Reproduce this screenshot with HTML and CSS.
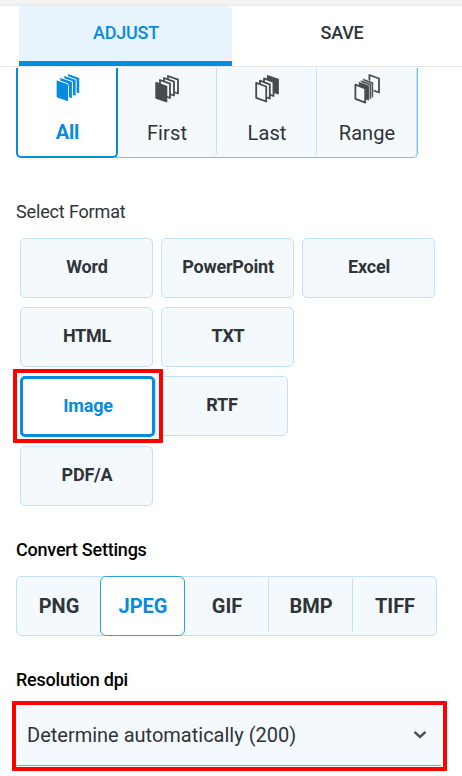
FILE: index.html
```html
<!DOCTYPE html>
<html lang="en">
<head>
<meta charset="utf-8">
<title>Convert</title>
<link rel="stylesheet" href="styles.css">
</head>
<body>
<div class="strip"></div>
<nav class="tabs">
  <div class="tab tab-active">ADJUST</div>
  <div class="tab">SAVE</div>
</nav>
<main>
  <div class="pages">
    <div class="page page-active">
      <svg class="icon" viewBox="0 0 26 31" width="26" height="31">
        <g fill="currentColor" stroke="#fff" stroke-width="1" stroke-linejoin="round">
          <path d="M12.6 1.4L24.8 5.7V22L12.6 18Z"/><path d="M8.8 3.3L21.1 7.6V24.4L8.8 20.5Z"/><path d="M4.8 5.2L17.4 9.6V26.8L4.8 22.6Z"/>
          <path d="M1.1 9.3Q1.1 7.7 2.6 8.2L12 11.5Q13.5 12 13.5 13.5V28.2Q13.5 30 11.8 29.4L2.6 26.1Q1.1 25.6 1.1 24.2Z"/>
        </g>
      </svg>
      <span>All</span>
    </div>
    <div class="page">
      <svg class="icon" viewBox="0 0 26 31" width="26" height="31">
        <g fill="#f4f9fd" stroke="currentColor" stroke-width="1.8" stroke-linejoin="round">
          <path d="M14 3L24 6.7V20.5L14 17Z"/><path d="M10 5L20 8.7V22.5L10 19Z"/><path d="M6 7L16 10.7V25L6 21Z"/><path fill="currentColor" d="M2.2 9.8L12.4 13.5V28.5L2.2 24.8Z"/>
        </g>
      </svg>
      <span>First</span>
    </div>
    <div class="page">
      <svg class="icon" viewBox="0 0 26 31" width="26" height="31">
        <g fill="#f4f9fd" stroke="currentColor" stroke-width="1.8" stroke-linejoin="round">
          <path fill="currentColor" d="M13.8 3L24 6.7V20.5L13.8 17Z"/><path d="M10 5.4L19.5 9V23L10 19.5Z"/><path d="M6 7.6L15.8 11.3V25.5L6 22Z"/><path d="M2.2 9.8L12.2 13.5V28.5L2.2 24.8Z"/>
        </g>
      </svg>
      <span>Last</span>
    </div>
    <div class="page">
      <svg class="icon" viewBox="0 0 26 31" width="26" height="31">
        <g fill="#f4f9fd" stroke="currentColor" stroke-width="1.8" stroke-linejoin="round">
          <path d="M15.4 2L25 5.5V19.5L15.4 16Z"/>
        </g>
        <g fill="currentColor" stroke="#f4f9fd" stroke-width="0.6" stroke-linejoin="round">
          <path d="M8.9 5.3L19.4 9.2V25L8.9 21Z"/><path d="M6.7 6.9L17.4 10.8V26.6L6.7 22.6Z"/><path d="M4.5 8.5L15.4 12.4V28L4.5 24Z"/>
        </g>
        <path fill="#f4f9fd" stroke="currentColor" stroke-width="1.8" stroke-linejoin="round" d="M1.4 11.7L11.2 15.4V29.6L1.4 25.9Z"/>
      </svg>
      <span>Range</span>
    </div>
  </div>

  <h2 class="label format-label">Select Format</h2>
  <div class="formats">
    <div class="row"><div class="tile">Word</div><div class="tile">PowerPoint</div><div class="tile">Excel</div></div>
    <div class="row"><div class="tile">HTML</div><div class="tile">TXT</div></div>
    <div class="row row-tight"><div class="tile tile-active">Image<i class="mark mark-image"></i></div><div class="tile">RTF</div></div>
    <div class="row"><div class="tile">PDF/A</div></div>
  </div>

  <h2 class="label label-dark convert-label">Convert Settings</h2>
  <div class="types">
    <div class="type">PNG</div><div class="type type-active">JPEG</div><div class="type">GIF</div><div class="type divided">BMP</div><div class="type divided">TIFF</div>
  </div>

  <h2 class="label label-dark dpi-label">Resolution dpi</h2>
  <div class="select">
    <span>Determine automatically (200)</span>
    <svg viewBox="0 0 14 10" width="14" height="10"><path d="M1.5 1.8L7 7L12.5 1.8" fill="none" stroke="#505458" stroke-width="2.5"/></svg>
    <i class="mark mark-select"></i>
  </div>
</main>
</body>
</html>
```
FILE: styles.css
```css
* { box-sizing: border-box; }
html, body { height: 100%; }
body {
  margin: 0;
  background: #fff;
  color: #303438;
  font-family: Roboto, "Liberation Sans", sans-serif;
  overflow: hidden;
}
.strip { height: 6px; background: linear-gradient(#f4f4f4 50%, #e9e9e9); }
.tabs {
  display: flex;
  height: 61px;
  padding-left: 19px;
  border-bottom: 1px solid #e4e4e4;
}
.tab {
  width: 213px;
  height: 60px;
  padding-bottom: 8px;
  display: flex;
  align-items: center;
  justify-content: center;
  font-size: 18px;
  font-weight: 500;
  letter-spacing: -0.2px;
}
.tab + .tab { width: 220px; }
.tab-active {
  background: linear-gradient(#078bdf, #078bdf) bottom / 100% 5px no-repeat #e7f4fe;
  color: #078bdf;
  border-radius: 5px 5px 0 0;
  padding-left: 1px;
}
main { padding: 1px 0 0 16px; }

.pages {
  display: flex;
  width: 402px;
  height: 90px;
  background: #f4f9fd;
  border: solid #7cbfec;
  border-width: 0 1px 1px 0;
  border-radius: 0 0 5px 5px;
}
.page {
  width: 100px;
  height: 89px;
  padding: 5px 0 0 1px;
  display: flex;
  flex-direction: column;
  align-items: center;
  border-right: 1px solid #c2e2f8;
  border-radius: 0 0 5px 0;
  font-size: 20px;
  line-height: 24px;
  letter-spacing: 0.1px;
}
.page:first-child { width: 102px; flex: none; }
.page:nth-child(2) { width: 99px; padding-left: 0; }
.page .icon { color: #484a4c; margin-bottom: 17px; }
.page-active {
  height: 90px;
  background: #fff;
  border: 2px solid #078bdf;
  border-top: 0;
  border-radius: 0 0 5px 5px;
  color: #078bdf;
  font-weight: 700;
  letter-spacing: -0.2px;
  padding-top: 4px;
}
.page-active .icon { color: #078bdf; }

.label { margin: 0; font-size: 18px; line-height: 22px; font-weight: 400; letter-spacing: -0.15px; }
.label-dark { color: #000; font-weight: 500; letter-spacing: -0.23px; }
.format-label { margin-top: 43px; }
.convert-label { margin-top: 33px; }
.dpi-label { margin-top: 33px; }

.formats {
  display: flex;
  flex-direction: column;
  gap: 9px;
  padding-left: 4px;
  margin-top: 15px;
}
.row { display: flex; gap: 8px; }
.row-tight { gap: 0; }
.tile {
  width: 133px;
  height: 60px;
  padding: 0 0 4px 1px;
  display: flex;
  align-items: center;
  justify-content: center;
  background: #f4f9fd;
  border: 1px solid #c2e2f8;
  border-radius: 5px;
  font-size: 18px;
  font-weight: 700;
  letter-spacing: -0.22px;
}
.tile-active {
  position: relative;
  width: 135px;
  height: 61px;
  padding-bottom: 2px;
  background: #fff;
  border: 3px solid #078bdf;
  color: #078bdf;
}
.mark { position: absolute; border: 4px solid #fe0000; border-radius: 1px; }
.mark-image { inset: -10px -11px -9px -10px; }

.types {
  display: flex;
  width: 421px;
  height: 60px;
  margin-top: 15px;
  background: #f4f9fd;
  border: 1px solid #c2e2f8;
  border-radius: 5px;
}
.type {
  flex: 1;
  padding-left: 1px;
  display: flex;
  align-items: center;
  justify-content: center;
  font-size: 20px;
  font-weight: 700;
}
.divided { margin: 1px 0 3px; padding-top: 2px; border-left: 1px solid #c2e2f8; }
.type-active {
  flex: none;
  width: 85px;
  margin: -1px 0;
  background: #fff;
  border: 1.5px solid #2f9fe5;
  border-radius: 6px;
  color: #078bdf;
}

.select {
  position: relative;
  display: flex;
  align-items: center;
  justify-content: space-between;
  width: 425px;
  height: 61px;
  margin-top: 14px;
  padding: 0 14px 0 11px;
  background: #f4f9fd;
  border-bottom: 1px solid #68b1dc;
  border-radius: 5px 5px 0 0;
  font-size: 20px;
}
.mark-select { inset: -4px -6px -6px -4px; }
```
